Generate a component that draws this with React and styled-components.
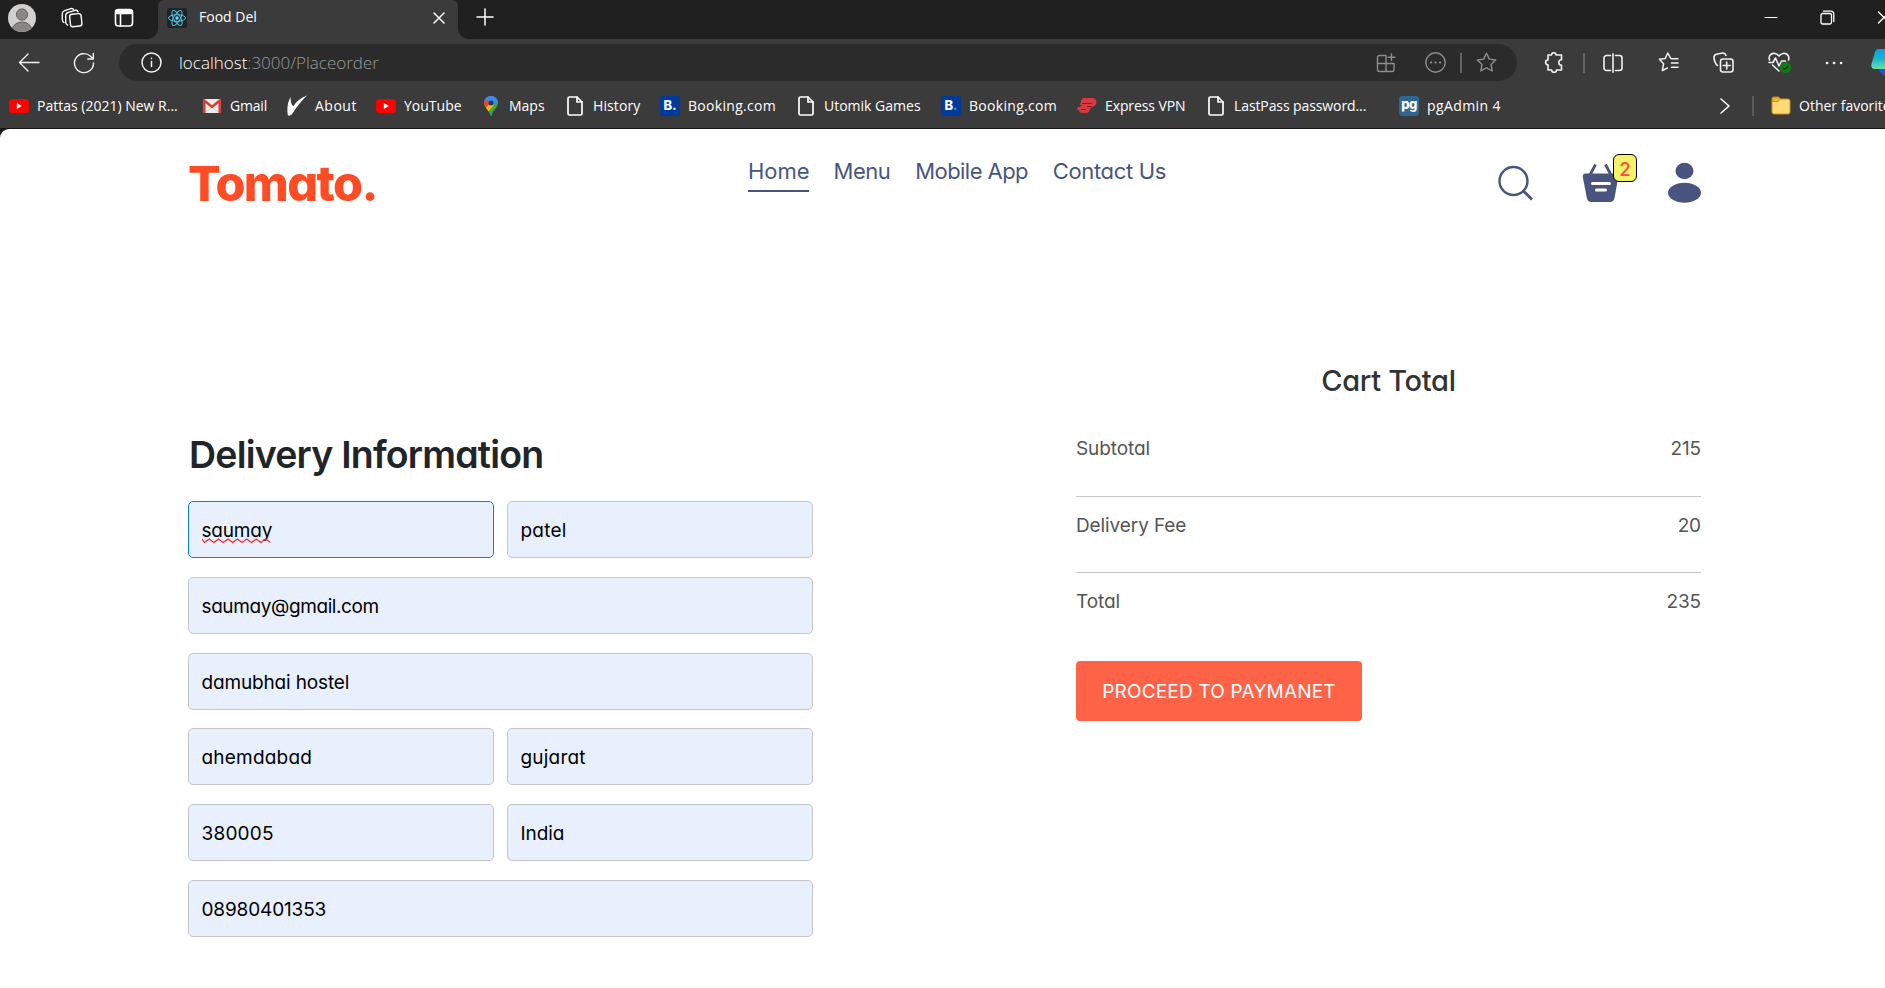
import React from 'react';
import styled, { createGlobalStyle } from 'styled-components';

const GlobalStyle = createGlobalStyle`
  *, *::before, *::after { box-sizing: border-box; }
  body { margin: 0; background: #1b1b1b; overflow: hidden; }
  svg { display: block; flex: none; }
`;

const ui = '"Open Sans", "Noto Sans", sans-serif';
const brand = 'Inter, "Liberation Sans", sans-serif';

const Window = styled.div`
  width: 1885px;
  height: 988px;
  overflow: hidden;
  display: flex;
  flex-direction: column;
  background: #1b1b1b;
`;

/* ---------- browser chrome ---------- */

const TabStrip = styled.div`
  height: 39px;
  flex: none;
  display: flex;
  align-items: flex-start;
  background: #202020;
  color: #fff;
`;

const StripTools = styled.div`
  width: 158px;
  height: 36px;
  flex: none;
  display: flex;
  align-items: center;
  padding-left: 8px;
`;

const StripTool = styled.div`
  width: ${(p) => p.$w}px;
  flex: none;
`;

const Tab = styled.div`
  position: relative;
  width: 300px;
  height: 39px;
  flex: none;
  display: flex;
  align-items: center;
  padding: 0 13px 4px 9px;
  background: #3b3b3b;
  border-radius: 6px 6px 0 0;
  font: 400 14px/20px ${ui};

  &::before, &::after {
    content: '';
    position: absolute;
    bottom: 0;
    width: 10px;
    height: 10px;
  }
  &::before {
    left: -10px;
    background: radial-gradient(circle at 0 0, transparent 9.5px, #3b3b3b 10px);
  }
  &::after {
    right: -10px;
    background: radial-gradient(circle at 100% 0, transparent 9.5px, #3b3b3b 10px);
  }
`;

const TabTitle = styled.span`
  flex: 1;
  padding: 0 0 1px 12px;
`;

const NewTab = styled.div`
  padding: 8px 0 0 18px;
`;

const WindowButtons = styled.div`
  margin-left: auto;
  width: 121px;
  flex: none;
  display: flex;
  gap: 42px;
  padding-top: 10px;
`;

const Toolbar = styled.div`
  height: 47px;
  flex: none;
  display: flex;
  align-items: flex-start;
  padding: 5px 0 0 18px;
  background: #3b3b3b;
  color: #f2f2f2;
`;

const NavButton = styled.div`
  width: ${(p) => p.$w}px;
  height: 37px;
  flex: none;
  display: flex;
  align-items: center;
`;

const AddressBar = styled.div`
  width: 1398px;
  height: 37px;
  flex: none;
  display: flex;
  align-items: center;
  padding: 0 20px 0 22px;
  background: #2b2b2b;
  border-radius: 19px;
  font: 300 17px/24px ${ui};
`;

const Url = styled.span`
  flex: 1;
  padding-left: 17px;
  color: #9a9a9a;
  b { color: #fff; font-weight: 300; }
`;

const AddressTools = styled.div`
  display: flex;
  align-items: center;
  color: #8d8d8d;
`;

const Gap = styled.span`
  width: ${(p) => p.$w}px;
  flex: none;
`;

const Divider = styled.span`
  width: 2px;
  height: ${(p) => p.$h || 20}px;
  flex: none;
  background: ${(p) => p.$c || '#636363'};
`;

const ToolbarTools = styled.div`
  height: 37px;
  display: flex;
  align-items: center;
  padding-left: 27px;
`;

const Bookmarks = styled.div`
  height: 43px;
  flex: none;
  display: flex;
  align-items: center;
  padding: 0 0 3px 9px;
  background: #3b3b3b;
  border-bottom: 1px solid #161616;
  color: #fff;
  font: 400 14px/20px ${ui};
`;

const Bookmark = styled.div`
  width: ${(p) => p.$w}px;
  flex: none;
  display: flex;
  align-items: center;
  gap: 8px;
  white-space: nowrap;
  letter-spacing: ${(p) => p.$ls || 0}px;
`;

const IconBox = styled.span`
  width: 20px;
  height: 20px;
  flex: none;
  display: flex;
  align-items: center;
  justify-content: center;
`;

/* ---------- page ---------- */

const Page = styled.div`
  flex: 1;
  background: #fff;
  border-top-left-radius: 9px;
  padding: 0 184px 0 188px;
  font-family: ${brand};
  font-feature-settings: 'cv11';
`;

const Header = styled.header`
  height: 211px;
  display: flex;
  align-items: flex-start;
`;

const Logo = styled.div`
  width: 560px;
  flex: none;
  padding-top: 26px;
  font-size: 48.5px;
  line-height: 58px;
  font-weight: 800;
  letter-spacing: -1.6px;
  color: #ff4c24;
`;

const Menu = styled.nav`
  display: flex;
  gap: 24.6px;
  padding-top: 27px;
`;

const MenuLink = styled.a`
  width: ${(p) => p.$w}px;
  height: 36px;
  padding-top: 1px;
  border-bottom: 2px solid ${(p) => (p.$active ? '#49557e' : 'transparent')};
  color: #49557e;
  font-size: 22px;
  line-height: 29px;
  letter-spacing: ${(p) => p.$ls || 0}px;
  white-space: nowrap;
`;

const Actions = styled.div`
  margin-left: auto;
  display: flex;
  align-items: flex-start;
  gap: 49px;
  padding-top: 33px;
  color: #49557e;
`;

const Basket = styled.div`
  position: relative;
`;

const Count = styled.span`
  position: absolute;
  left: 31px;
  top: -8px;
  width: 24px;
  height: 28px;
  border: 1px solid #000;
  border-radius: 6px;
  background: #f3f368;
  color: #ff4a4a;
  font-size: 18.5px;
  font-weight: 500;
  line-height: 28px;
  text-align: center;
`;

const Main = styled.main`
  display: flex;
  justify-content: space-between;
`;

const Form = styled.form`
  width: 625px;
  padding-top: 92px;
`;

const FormTitle = styled.h1`
  margin: 0 0 23px;
  padding-left: 1px;
  font-size: 37.5px;
  line-height: 46px;
  font-weight: 600;
  letter-spacing: -0.8px;
  color: #212529;
`;

const Fields = styled.div`
  display: grid;
  grid-template-columns: 1fr 1fr;
  gap: 18.8px 13px;
`;

const Field = styled.div`
  grid-column: ${(p) => (p.$wide ? '1 / -1' : 'auto')};
  height: 57px;
  padding: 0 12.5px;
  border: 1px solid ${(p) => (p.$focus ? '#0a7cf5' : '#c5c5c5')};
  border-radius: 5px;
  background: #e8f0fe;
  color: #000;
  font-size: 19px;
  line-height: 57px;
  letter-spacing: ${(p) => p.$ls || 0}px;
  white-space: nowrap;
`;

const Misspelled = styled.span`
  position: relative;
  display: inline-block;
  svg { position: absolute; left: 0; top: 36px; }
`;

const Cart = styled.section`
  width: 625px;
  padding-top: 21px;
`;

const CartTitle = styled.h2`
  margin: 0 0 19px;
  text-align: center;
  font-size: 29px;
  line-height: 40px;
  font-weight: 500;
  letter-spacing: -0.3px;
  color: #333;
`;

const CartRow = styled.div`
  height: 76.5px;
  display: flex;
  justify-content: space-between;
  padding-top: 7px;
  border-bottom: 1px solid ${(p) => (p.$last ? 'transparent' : '#c8c8c8')};
  color: #555;
  font-size: 19px;
  line-height: 44px;
  letter-spacing: -0.1px;
`;

const PayButton = styled.button`
  display: block;
  width: 286px;
  height: 60px;
  margin-top: 11px;
  padding: 0;
  border: 0;
  border-radius: 4px;
  background: #ff6347;
  color: #fff;
  font: 400 19px/61px ${brand};
  letter-spacing: 0.2px;
`;

/* ---------- icons ---------- */

const Line = ({ w = 20, h = w, box, sw = 1.4, children }) => (
  <svg width={w} height={h} viewBox={box || `0 0 ${w} ${h}`} fill="none" stroke="currentColor"
    strokeWidth={sw} strokeLinecap="round" strokeLinejoin="round">{children}</svg>
);

const Avatar = () => (
  <svg width="28" height="28" viewBox="0 0 28 28">
    <clipPath id="face"><circle cx="14" cy="14" r="14" /></clipPath>
    <circle cx="14" cy="14" r="14" fill="#d2d0ce" />
    <g clipPath="url(#face)" fill="#8a8886" stroke="#5f5d5b">
      <circle cx="14" cy="10.5" r="5.6" />
      <ellipse cx="14" cy="25.5" rx="9.5" ry="7.5" />
    </g>
  </svg>
);

const Workspaces = () => (
  <Line w={22} h={22}>
    <rect x="9" y="7" width="11.5" height="12.5" rx="2.5" transform="rotate(-6 14 13)" />
    <path d="M6.5 18c-1.500-.5-1.800-1.500-1.800-3V8.500c0-1.800 1-2.700 2.500-3.200l7-2c1.500-.3 2.500.3 3 1.600" />
    <path d="M3 15.500c-1.500-.8-1.700-1.500-1.700-3V6.800c0-1.800.8-2.600 2.300-3.100l6.200-2.100c1.300-.4 2.300 0 2.900 1" />
  </Line>
);

const TabActions = () => (
  <Line w={20} h={20} sw={1.6}>
    <rect x="1.500" y="1.500" width="17" height="16.500" rx="3" />
    <path d="M2 3h16M2 5h16" strokeWidth="2.400" />
    <path d="M6.500 6v12" />
  </Line>
);

const ReactMark = () => (
  <svg width="20" height="20" viewBox="0 0 20 20">
    <rect width="20" height="20" rx="2" fill="#20232a" />
    <g fill="none" stroke="#53c1de" strokeWidth="1">
      <ellipse cx="10" cy="10" rx="8.500" ry="3.300" />
      <ellipse cx="10" cy="10" rx="8.500" ry="3.300" transform="rotate(60 10 10)" />
      <ellipse cx="10" cy="10" rx="8.500" ry="3.300" transform="rotate(120 10 10)" />
    </g>
    <circle cx="10" cy="10" r="1.700" fill="#61dafb" />
  </svg>
);

const YouTubeMark = () => (
  <svg width="20" height="14" viewBox="0 0 20 14">
    <rect width="20" height="14" rx="3.500" fill="#f00" />
    <path d="M7.800 4l5 3-5 3z" fill="#fff" />
  </svg>
);

const GmailMark = () => (
  <svg width="18" height="14" viewBox="0 0 18 14">
    <rect width="18" height="14" rx="1.500" fill="#ececec" />
    <path d="M3 13l6-5 6 5" fill="none" stroke="#cfcfcf" />
    <path d="M1.300 14V1.500L9 8l7.700-6.500V14" fill="none" stroke="#d93a30" strokeWidth="2.400" />
  </svg>
);

const SwooshMark = () => (
  <svg width="20" height="21" viewBox="0 0 20 21">
    <path d="M3.500 2C0 8 0 16 .8 20c1 1.200 2.800.8 3.800-.4C8.500 14 13 7 20 .5c-5.500 2-10.500 5.500-13.500 10.500C4.500 10.500 3.800 7 3.500 2z" fill="#fff" />
  </svg>
);

const MapsMark = () => (
  <svg width="14" height="20" viewBox="0 0 14 20">
    <clipPath id="pin"><path d="M7 0a7 7 0 0 1 7 7c0 4.500-4.800 6.500-6.200 12q-.8 1.800-1.600 0C4.800 13.500 0 11.500 0 7a7 7 0 0 1 7-7z" /></clipPath>
    <g clipPath="url(#pin)">
      <rect width="14" height="20" fill="#34a853" />
      <path d="M0 0h14v4L7 9 0 5z" fill="#4285f4" />
      <path d="M0 3l7 4-5 6-2-2z" fill="#ea4335" />
      <path d="M1 13l6-7 3 3-6 7z" fill="#fbbc04" />
      <path d="M8 0l6 0v6l-5 1z" fill="#4285f4" />
    </g>
    <circle cx="7" cy="7" r="2.500" fill="#1f3a68" />
  </svg>
);

const FileMark = () => (
  <Line w={16} h={20} sw={1.700}>
    <path d="M3 1h7l5 5v11.500A1.500 1.500 0 0 1 13.500 19H2.500A1.500 1.500 0 0 1 1 17.500V2.500A1.500 1.500 0 0 1 2.500 1z" />
    <path d="M10 1v5h5" />
  </Line>
);

const Tile = styled.span`
  width: 20px;
  height: 20px;
  border-radius: 3px;
  background: ${(p) => p.$bg};
  color: #fff;
  font: 800 ${(p) => p.$size}px/${(p) => p.$lh || 19}px ${brand};
  letter-spacing: ${(p) => p.$ls || 0}px;
  text-align: center;
  i { font-style: normal; color: ${(p) => p.$dot || '#fff'}; }
`;

const BookingMark = ({ dot }) => <Tile $bg="#003a9b" $size={13} $dot={dot}>B<i>.</i></Tile>;
const PgMark = () => <Tile $bg="#2f6792" $size={13} $lh={17} $ls={-0.6}>pg</Tile>;

const VpnMark = () => (
  <svg width="20" height="18" viewBox="0 0 20 18">
    <path d="M6 1h10q4 1 3.300 5-.8 3.500-4.300 4-1.500.3-2 2.500-.5 2.500-3 3.500H5q-3-.5-3-3H0l1-3h2q.500-1.500 2.500-2H3L4 4q.500-2 2-3z" fill="#da3940" />
    <path d="M5 6.500h9.500M4 12.500h5M10 9.500h4" stroke="#7d1f2a" strokeWidth="1.100" />
  </svg>
);

const FolderMark = () => (
  <svg width="20" height="19" viewBox="0 0 20 19">
    <path d="M1 3a2 2 0 0 1 2-2h4.500l2 2H17a2 2 0 0 1 2 2v11a2 2 0 0 1-2 2H3a2 2 0 0 1-2-2z" fill="#ffd976" stroke="#c99416" />
    <path d="M1.500 5.500V3A1.500 1.500 0 0 1 3 1.500h4.300L9 3.200 7 5.500z" fill="#f0b429" stroke="#c99416" />
  </svg>
);

const STAR = 'M10.500 1.200l2.800 5.900 6.400.9-4.700 4.500 1.200 6.500-5.700-3.100-5.700 3.100 1.200-6.500L1.300 8l6.400-.9z';

const wave = Array.from({ length: 15 }, (_, i) => `L${2.500 + i * 4.700} ${i % 2 ? 1 : 4.500}`).join(' ');

const bookmarks = [
  { label: 'Pattas (2021) New R...', icon: <YouTubeMark />, w: 193 },
  { label: 'Gmail', icon: <GmailMark />, w: 85, ls: -0.2 },
  { label: 'About', icon: <SwooshMark />, w: 89, ls: 0.5 },
  { label: 'YouTube', icon: <YouTubeMark />, w: 105 },
  { label: 'Maps', icon: <MapsMark />, w: 84 },
  { label: 'History', icon: <FileMark />, w: 95, ls: 0.1 },
  { label: 'Booking.com', icon: <BookingMark />, w: 136, ls: 0.3 },
  { label: 'Utomik Games', icon: <FileMark />, w: 145 },
  { label: 'Booking.com', icon: <BookingMark dot="#35a8f0" />, w: 136, ls: 0.3 },
  { label: 'Express VPN', icon: <VpnMark />, w: 129, ls: -0.1 },
  { label: 'LastPass password...', icon: <FileMark />, w: 193, ls: -0.1 },
  { label: 'pgAdmin 4', icon: <PgMark />, w: 320, ls: 0.4 },
];

const fields = [
  { value: 'saumay', ls: -0.2, focus: true },
  { value: 'patel', ls: 0.2 },
  { value: 'saumay@gmail.com', ls: -0.4, wide: true },
  { value: 'damubhai hostel', ls: -0.15, wide: true },
  { value: 'ahemdabad', ls: 0.2 },
  { value: 'gujarat', ls: 0.2 },
  { value: '380005', ls: 0.2 },
  { value: 'India', ls: -0.1 },
  { value: '08980401353', ls: -0.15, wide: true },
];

const totals = [['Subtotal', 215], ['Delivery Fee', 20], ['Total', 235]];

function Chrome() {
  return (
    <>
      <TabStrip>
        <StripTools>
          <StripTool $w={53}><Avatar /></StripTool>
          <StripTool $w={53}><Workspaces /></StripTool>
          <StripTool $w={20}><TabActions /></StripTool>
        </StripTools>
        <Tab>
          <ReactMark />
          <TabTitle>Food Del</TabTitle>
          <Line w={12} sw={1.500}><path d="M1 1l10 10M11 1L1 11" /></Line>
        </Tab>
        <NewTab><Line w={18} sw={1.500}><path d="M9 1v16M1 9h16" /></Line></NewTab>
        <WindowButtons>
          <Line w={14} h={15} sw={1.200}><path d="M1 7.500h12" /></Line>
          <Line w={15} sw={1.300}><rect x="1" y="3.500" width="10.500" height="10.500" rx="1.500" /><path d="M3.500 1.200H11a2.800 2.800 0 0 1 2.800 2.800v7.500" /></Line>
          <Line w={14} h={15} sw={1.300}><path d="M1.500 2l5.500 5.500-5.500 5.500M12.500 2L7 7.500l5.500 5.500" /></Line>
        </WindowButtons>
      </TabStrip>

      <Toolbar>
        <NavButton $w={55}><Line w={22} h={20}><path d="M21 9.500H1.500M10 1L1.500 9.500l8.500 8.500" /></Line></NavButton>
        <NavButton $w={46}>
          <Line w={22} h={22}><path d="M20.500 11A9.500 9.500 0 1 1 17.500 4.200L20 6.700M20.300 1.500v5.500h-5.500" /></Line>
        </NavButton>
        <AddressBar>
          <Line w={21} sw={1.500}><circle cx="10.500" cy="10.500" r="9.500" /><path d="M10.500 9.500v5M10.500 6.200v.4" /></Line>
          <Url><b>localhost</b>:3000/Placeorder</Url>
          <AddressTools>
            <Line w={20}><path d="M10 2.500H3.500a2 2 0 0 0-2 2v12a2 2 0 0 0 2 2H16a2 2 0 0 0 2-2V10.500H1.500M10 2.500v16M15.500 1v6.500M12.200 4.200h6.600" /></Line>
            <Gap $w={29} />
            <Line w={21}><circle cx="10.500" cy="10.500" r="9.700" /><path d="M6 10.500h.1M10.500 10.500h.1M15 10.500h.1" strokeWidth="2.200" /></Line>
            <Gap $w={14} />
            <Divider />
            <Gap $w={14} />
            <Line w={21}><path d={STAR} /></Line>
          </AddressTools>
        </AddressBar>
        <ToolbarTools>
          <Line w={19} h={21} sw={1.600}><path d="M5 3h2.500a2.300 2.300 0 0 1 4.600 0H17.500v4.800a2.700 2.700 0 1 0 0 5.400V18h-5a2.400 2.400 0 0 1-4.800 0H4v-5.200a2.400 2.400 0 0 1 0-4.800V3z" /></Line>
          <Gap $w={20} />
          <Divider />
          <Gap $w={18} />
          <Line w={20} sw={1.600}><path d="M7.500 2.500h-4a2.500 2.500 0 0 0-2.500 2.500v10a2.500 2.500 0 0 0 2.500 2.500h4M12.500 2.500h4A2.500 2.500 0 0 1 19 5v10a2.500 2.500 0 0 1-2.500 2.500h-4M10 .8v18.400" /></Line>
          <Gap $w={35} />
          <Line w={21} sw={1.500}><path d="M12.800 6.500L9.800 1l-2.600 5.500-5.800.8 4.200 4.500-1.300 6.700 5.200-2.500M13.500 6.800H20M13.500 11H20M13.500 15.200H20" /></Line>
          <Gap $w={34} />
          <Line w={21} sw={1.600}><rect x="7.500" y="7" width="12.500" height="13" rx="2.500" /><path d="M13.700 10v7M10.200 13.500h7M4.500 13.500C2.500 12.500 1 8 1 5.200 1 3.500 2 2.600 3.500 2.200L9.500 1c1.800-.2 2.800.5 3.500 2.500" /></Line>
          <Gap $w={34} />
          <svg width="24" height="21" viewBox="0 0 24 21">
            <path d="M1.500 8C0 3 4 1 7 1.500q2.500.5 4 2.500 1.500-2 4-2.500C18 1 22 3 20.500 8M1 10.500h4L7.500 6l3.500 8 2.500-5h4M4.500 13l6.500 6" fill="none" stroke="#f2f2f2" strokeWidth="1.600" strokeLinecap="round" strokeLinejoin="round" />
            <circle cx="17.500" cy="15.500" r="5.500" fill="#107c10" />
            <path d="M15 15.700l1.800 1.800 3.400-3.600" fill="none" stroke="#0a2a0a" strokeWidth="1.200" />
          </svg>
          <Gap $w={33} />
          <Line w={18}><path d="M2 9h.1M9 9h.1M16 9h.1" strokeWidth="2.600" /></Line>
          <Gap $w={28} />
          <svg width="28" height="27" viewBox="0 0 28 27">
            <defs><linearGradient id="co" x1="0" y1="0" x2="0" y2="1"><stop offset="0" stopColor="#149be8" /><stop offset=".5" stopColor="#18b8cf" /><stop offset="1" stopColor="#6fe0a0" /></linearGradient></defs>
            <path d="M7 18h20v8H13q-4-1-6-8z" fill="#1558e0" />
            <path d="M7 0h20v20H3q-3.500-1-2.500-5L4 3q1-3 3-3z" fill="url(#co)" />
          </svg>
        </ToolbarTools>
      </Toolbar>

      <Bookmarks>
        {bookmarks.map((b, i) => (
          <Bookmark key={i} $w={b.w} $ls={b.ls}>
            <IconBox>{b.icon}</IconBox>
            {b.label}
          </Bookmark>
        ))}
        <Line w={12} h={18} sw={1.600}><path d="M2 2l8 7-8 7" /></Line>
        <Gap $w={21} />
        <Divider $c="#5a5a5a" />
        <Gap $w={17} />
        <Bookmark $w={130}>
          <IconBox><FolderMark /></IconBox>
          Other favorites
        </Bookmark>
      </Bookmarks>
    </>
  );
}

export default function App() {
  return (
    <Window>
      <GlobalStyle />
      <Chrome />
      <Page>
        <Header>
          <Logo>Tomato.</Logo>
          <Menu>
            <MenuLink $w={61} $active>Home</MenuLink>
            <MenuLink $w={57} $ls={-0.5}>Menu</MenuLink>
            <MenuLink $w={113} $ls={-0.55}>Mobile App</MenuLink>
            <MenuLink $w={113} $ls={-0.35}>Contact Us</MenuLink>
          </Menu>
          <Actions>
            <svg width="35" height="39" viewBox="0 0 35 39" fill="none" stroke="currentColor" strokeWidth="2.400">
              <circle cx="15.500" cy="19" r="14" />
              <path d="M25.500 29l8.500 8.500" strokeWidth="2.800" />
            </svg>
            <Basket>
              <svg width="37" height="41" viewBox="0 0 37 41">
                <path d="M8 13L13.500 2.500M29 13L23.500 2.500" stroke="currentColor" strokeWidth="2.800" />
                <path d="M3.500 11.500h30q3 .3 2.800 3.500l-3.800 21q-.8 4-4.500 4H9.500q-4 0-4.600-4L.800 15q-.3-3.200 2.700-3.500z" fill="currentColor" />
                <path d="M10.500 21.500h17M14.500 28h9" stroke="#fff" strokeWidth="3" strokeLinecap="round" />
              </svg>
              <Count>2</Count>
            </Basket>
            <svg width="33" height="41" viewBox="0 0 33 41" fill="currentColor">
              <ellipse cx="16.500" cy="9" rx="9" ry="8.300" />
              <ellipse cx="16.500" cy="30.800" rx="16.500" ry="10" />
            </svg>
          </Actions>
        </Header>
        <Main>
          <Form>
            <FormTitle>Delivery Information</FormTitle>
            <Fields>
              {fields.map((f) => (
                <Field key={f.value} $wide={f.wide} $focus={f.focus} $ls={f.ls}>
                  {f.focus ? (
                    <Misspelled>
                      {f.value}
                      <svg width="71" height="6" viewBox="0 0 71 6"><path d={`M0 1 ${wave}`} fill="none" stroke="#f22" strokeWidth="1.200" /></svg>
                    </Misspelled>
                  ) : f.value}
                </Field>
              ))}
            </Fields>
          </Form>
          <Cart>
            <CartTitle>Cart Total</CartTitle>
            {totals.map(([name, amount], i) => (
              <CartRow key={name} $last={i === totals.length - 1}>
                <span>{name}</span>
                <span>{amount}</span>
              </CartRow>
            ))}
            <PayButton type="button">PROCEED TO PAYMANET</PayButton>
          </Cart>
        </Main>
      </Page>
    </Window>
  );
}
